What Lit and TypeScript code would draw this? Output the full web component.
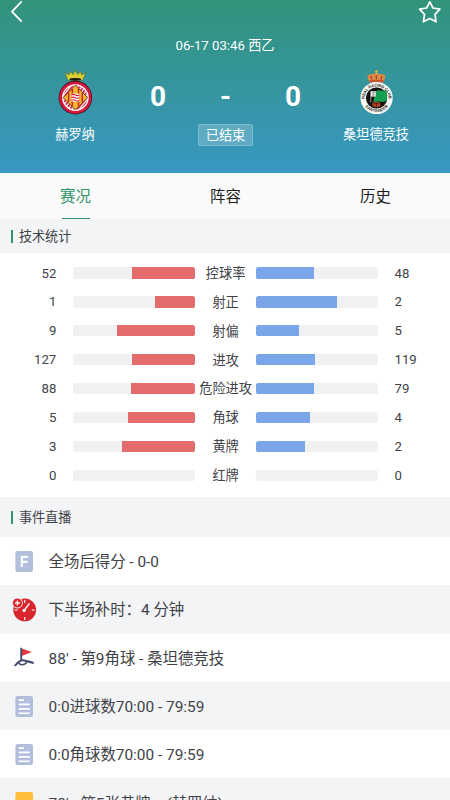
import { LitElement, html, svg, css, CSSResultGroup } from "lit";
import { customElement, property, state } from "lit/decorators.js";
import { classMap } from "lit/directives/class-map.js";
import { styleMap } from "lit/directives/style-map.js";

interface Stat {
    label: string;
    home: number;
    away: number;
}

interface MatchEvent {
    icon: string;
    text: string;
}

const STATS: Stat[] = [
    { label: "控球率", home: 52, away: 48 },
    { label: "射正", home: 1, away: 2 },
    { label: "射偏", home: 9, away: 5 },
    { label: "进攻", home: 127, away: 119 },
    { label: "危险进攻", home: 88, away: 79 },
    { label: "角球", home: 5, away: 4 },
    { label: "黄牌", home: 3, away: 2 },
    { label: "红牌", home: 0, away: 0 },
];

const EVENTS: MatchEvent[] = [
    { icon: "full", text: "全场后得分 - 0-0" },
    { icon: "clock", text: "下半场补时：4 分钟" },
    { icon: "corner", text: "88' - 第9角球 - 桑坦德竞技" },
    { icon: "note", text: "0:0进球数70:00 - 79:59" },
    { icon: "note", text: "0:0角球数70:00 - 79:59" },
    { icon: "yellow", text: "78' - 第5张黄牌 -\u00a0 (赫罗纳)" },
];

const TABS = ["赛况", "阵容", "历史"];

const ICONS: Record<string, unknown> = {
    full: svg`
        <rect x="3.4" y="1.9" width="17.6" height="21" rx="2.2" fill="#b1bfdc"/>
        <path d="M9.8 18V7.9H16.2M9.8 12.9H15.4" fill="none" stroke="#fff" stroke-width="2.1"/>`,
    clock: svg`
        <circle cx="12.7" cy="12.9" r="11.4" fill="#d8262c"/>
        <path d="M12.7 3V6M12.7 20V23M2.6 13H5.6M19.8 13H22.8" stroke="#fff" stroke-width="1.2"/>
        <path d="M12 13.6L17.2 6.8" stroke="#fff" stroke-width="1.4" stroke-linecap="round"/>
        <circle cx="12.1" cy="13.4" r="1.7" fill="#fff"/>
        <circle cx="5.4" cy="6" r="5.4" fill="#f4f5f7"/>
        <circle cx="5.4" cy="6" r="4.6" fill="#d8262c"/>
        <path d="M3 6H7.8M5.4 3.6V8.4" stroke="#fff" stroke-width="1.3"/>`,
    corner: svg`
        <path d="M9.6 3.6L20 7L9.6 11Z" fill="#e03a40"/>
        <path d="M9.2 2.8V16" stroke="#414a6c" stroke-width="1.8"/>
        <path d="M2.8 21C6 16.8 9 14.9 12.2 15.4C15.6 16 18 17.4 21.8 17.9" fill="none" stroke="#414a6c" stroke-width="2"/>
        <path d="M6.6 17.4C7.4 20.4 13.6 21 15 16.4" fill="none" stroke="#414a6c" stroke-width="1.5"/>`,
    note: svg`
        <rect x="3.4" y="1.9" width="17.6" height="21" rx="2.2" fill="#b1bfdc"/>
        <path d="M6.6 6.1H12M6.6 10.4H17.8M6.6 14.9H17.8M6.6 19.3H17.8" stroke="#fff" stroke-width="1.6"/>`,
    yellow: svg`<rect x="3.4" y="1.9" width="17.6" height="21" rx="2.2" fill="#ffc03d"/>`,
};

const homeCrest = svg`
    <path d="M17.8 15.2L15 7.6L19 10L20 6.6L23 9.6L25.3 5L27.6 9.6L30.6 6.6L31.6 10L35.6 7.6L32.8 15.2Z" fill="#d9cf35" stroke="#4d5a1c" stroke-width="0.5"/>
    <ellipse cx="25.3" cy="14.3" rx="6" ry="1.4" fill="#1c1a14"/>
    <circle cx="25.4" cy="32.6" r="16.8" fill="#2b1220"/>
    <circle cx="25.4" cy="32.6" r="16.2" fill="#d3173a"/>
    <circle cx="25.4" cy="32.6" r="13.3" fill="#fff"/>
    <circle cx="25.4" cy="32.6" r="12" fill="url(#stripes)"/>
    <path d="M25.4 20.2L37.6 32.6L25.4 45L13.2 32.6Z" fill="#f3b52b" stroke="#411813" stroke-width="0.7"/>
    <path d="M22.3 24V41M28.5 24V41M18.6 28V37M32.2 28V37" stroke="#c9222d" stroke-width="1.4"/>
    <path d="M21.6 28.6H29.2V36.6H21.6Z" fill="#fff"/>
    <path d="M21.6 30Q23.5 28.8 25.4 30T29.2 30M21.6 32.7Q23.5 31.5 25.4 32.7T29.2 32.7M21.6 35.4Q23.5 34.2 25.4 35.4T29.2 35.4" fill="none" stroke="#d3173a" stroke-width="1.1"/>
    <defs>
        <pattern id="stripes" width="3" height="3" patternUnits="userSpaceOnUse" patternTransform="rotate(38)">
            <rect width="3" height="3" fill="#fff"/>
            <rect width="1.7" height="3" fill="#d3173a"/>
        </pattern>
    </defs>`;

const awayCrest = svg`
    <path d="M19 18L17 12.2Q18 8.8 22.4 9.6L25.8 8.2L29.4 9.6Q34 8.8 35 12.2L33 18Z" fill="#dd8a43"/>
    <path d="M26 5.4V10M24.4 7H27.6" stroke="#cdb94a" stroke-width="1.1"/>
    <path d="M20.4 11.4L21.6 15M26 10.4V15M31.6 11.4L30.4 15" stroke="#a8432f" stroke-width="1.3"/>
    <path d="M19 16.4H33" stroke="#c8452f" stroke-width="1.6"/>
    <circle cx="26.2" cy="33.4" r="16.1" fill="#f8f8f4"/>
    <circle cx="26.2" cy="33.4" r="10.6" fill="#15120f"/>
    <path d="M25 27Q28 24.6 30.6 26.2L36 25.6Q37.4 30 36.4 35.4Q33.4 38.6 30 36.8L23 37.4Z" fill="#16a052"/>
    <path d="M20.4 26.6H25.4V32H20.4Z" fill="#ece9e2"/>
    <path d="M21.6 28H24.4M21.6 30.2H24.4M23 27V31.6" stroke="#8c8a86" stroke-width="0.6"/>
    <path d="M20.4 26.6V38" stroke="#ece9e2" stroke-width="0.6"/>
    <ellipse cx="26" cy="39.8" rx="4.2" ry="2.7" fill="#b3421f"/>
    <path d="M23.4 39H28.6M26 37.6V42" stroke="#3b1710" stroke-width="0.7"/>
    <defs>
        <path id="arc-top" d="M14.6 37A12 12 0 1 1 37.8 37"/>
        <path id="arc-bottom" d="M12.4 37.2A14.4 14.4 0 0 0 40 37.2"/>
    </defs>
    <text class="crest-text"><textPath href="#arc-top" startOffset="50%" text-anchor="middle" textLength="38">REAL RACING CLUB</textPath></text>
    <text class="crest-text"><textPath href="#arc-bottom" startOffset="50%" text-anchor="middle" textLength="27">SANTANDER</textPath></text>`;

@customElement("stat-row")
export class StatRow extends LitElement {
    static styles = css`
        :host {
            display: grid;
            grid-template-columns: 56.3px 17px 122px 60.6px 122px 1fr;
            align-items: center;
            height: 28.9px;
            font-size: 13.2px;
            color: #414247;
        }

        .home {
            text-align: right;
        }

        .away {
            padding-left: 16.6px;
        }

        .label {
            display: flex;
            justify-content: center;
            padding-bottom: 1.4px;
            white-space: nowrap;
        }

        .bar {
            height: 11.2px;
            border-radius: 2.6px;
            background-color: #f0f1f3;
            overflow: hidden;
        }

        .home-bar {
            display: flex;
            grid-column: 3;
            justify-content: flex-end;
        }

        .fill {
            height: 100%;
            background-color: #e36b6c;
        }

        .away-bar .fill {
            background-color: #7aa5e9;
        }
    ` as CSSResultGroup;

    @property({ attribute: false })
    stat!: Stat;

    private share(value: number) {
        const total = this.stat.home + this.stat.away;
        return { width: `${total === 0 ? 0 : (value / total) * 100}%` };
    }

    render() {
        const { label, home, away } = this.stat;
        return html`
            <div class="home">${home}</div>
            <div class="bar home-bar"><div class="fill" style=${styleMap(this.share(home))}></div></div>
            <div class="label">${label}</div>
            <div class="bar away-bar"><div class="fill" style=${styleMap(this.share(away))}></div></div>
            <div class="away">${away}</div>
        `;
    }
}

@customElement("app-root")
export class AppRoot extends LitElement {
    static styles = css`
        :host {
            display: flex;
            flex-direction: column;
            width: 100%;
            height: 800px;
            overflow: hidden;
            background-color: #fff;
            color: #414247;
            font-family: Roboto, "Noto Sans CJK SC", sans-serif;
        }

        svg {
            display: block;
        }

        header {
            box-sizing: border-box;
            flex: none;
            height: 173px;
            color: #fff;
            background: linear-gradient(#32937a, #3997c3);
        }

        .top-bar {
            display: flex;
            justify-content: space-between;
            height: 24px;
            padding: 0px 8px;
        }

        .date {
            height: 42px;
            line-height: 43px;
            font-size: 13.2px;
            text-align: center;
        }

        .match {
            display: grid;
            grid-template-columns: 150px 1fr 150px;
        }

        .team {
            display: flex;
            flex-direction: column;
            align-items: center;
            font-size: 13.2px;
        }

        .team span {
            height: 20px;
            margin-top: 5px;
            line-height: 20px;
        }

        .crest-text {
            font: bold 4px "Liberation Sans", sans-serif;
            fill: #2a2723;
        }

        .result {
            display: flex;
            flex-direction: column;
            align-items: center;
        }

        .score {
            display: flex;
            justify-content: space-between;
            width: 151px;
            height: 58px;
            line-height: 61px;
            font-size: 28px;
            font-weight: 700;
        }

        .status {
            box-sizing: border-box;
            width: 55px;
            height: 22px;
            border: 1px solid rgba(255, 255, 255, 0.2);
            border-radius: 2px;
            background-color: rgba(255, 255, 255, 0.2);
            line-height: 21px;
            font-size: 13.2px;
            text-align: center;
        }

        nav {
            display: grid;
            grid-template-columns: repeat(3, 1fr);
            flex: none;
            height: 46px;
            background-color: #fafafa;
        }

        .tab {
            display: flex;
            flex-direction: column;
            align-items: center;
            justify-content: space-between;
            height: 46px;
            padding-left: 1px;
            line-height: 49px;
            font-size: 15.4px;
            color: #1c1c1c;
        }

        .tab::after {
            content: '';
            width: 28px;
            height: 1.5px;
            margin-top: -5px;
        }

        .tab.active {
            color: #31936c;
        }

        .tab.active::after {
            background-color: #31936c;
        }

        h2 {
            display: flex;
            align-items: center;
            flex: none;
            gap: 5.5px;
            height: 34px;
            margin: 0px;
            padding-left: 11px;
            background-color: #f3f4f6;
            font-size: 13.1px;
            font-weight: 400;
        }

        h2::before {
            content: '';
            width: 2.4px;
            height: 13px;
            background-color: #31936c;
        }

        h2.live {
            height: 40px;
        }

        h2 span {
            padding-bottom: 1.4px;
        }

        .stats {
            box-sizing: border-box;
            flex: none;
            height: 244px;
            padding-top: 5.6px;
        }

        .event {
            display: flex;
            align-items: center;
            flex: none;
            gap: 12.6px;
            height: 48.3px;
            padding-left: 12px;
            font-size: 15.4px;
        }

        .event:nth-of-type(even) {
            background-color: #f3f4f6;
        }

        .event span {
            padding-bottom: 2px;
        }
    ` as CSSResultGroup;

    @state()
    private activeTab: number = 0;

    private renderHeader() {
        return html`
            <header>
                <div class="top-bar">
                    <svg width="18" height="24" viewBox="0 0 18 24">
                        <path d="M13.2 1.8L4 11.6L13.2 21.2" fill="none" stroke="#fff" stroke-width="1.8" stroke-linecap="round" stroke-linejoin="round"/>
                    </svg>
                    <svg width="24" height="24" viewBox="0 0 24 24">
                        <path d="M11.8 1.8L14.9 8L21.9 9.1L17 14.3L18 21.8L11.8 18.6L5.4 21.8L6.5 14.3L1.6 9.1L8.6 8Z" fill="none" stroke="#fff" stroke-width="1.7" stroke-linejoin="round"/>
                    </svg>
                </div>
                <div class="date">06-17 03:46 西乙</div>
                <div class="match">
                    <div class="team">
                        <svg width="50" height="54" viewBox="0 1 50 54">${homeCrest}</svg>
                        <span>赫罗纳</span>
                    </div>
                    <div class="result">
                        <div class="score"><span>0</span><span>-</span><span>0</span></div>
                        <div class="status">已结束</div>
                    </div>
                    <div class="team">
                        <svg width="50" height="54" viewBox="0.6 1.4 50 54">${awayCrest}</svg>
                        <span>桑坦德竞技</span>
                    </div>
                </div>
            </header>
        `;
    }

    render() {
        return html`
            ${this.renderHeader()}
            <nav>
                ${TABS.map((tab, i) => html`
                    <div class="tab ${classMap({ "active": this.activeTab === i })}" @click=${() => { this.activeTab = i; }}>${tab}</div>
                `)}
            </nav>
            <h2><span>技术统计</span></h2>
            <section class="stats">
                ${STATS.map((stat) => html`<stat-row .stat=${stat}></stat-row>`)}
            </section>
            <h2 class="live"><span>事件直播</span></h2>
            ${EVENTS.map((event) => html`
                <div class="event">
                    <svg width="24" height="25" viewBox="0 0 24 25">${ICONS[event.icon]}</svg>
                    <span>${event.text}</span>
                </div>
            `)}
        `;
    }
}
